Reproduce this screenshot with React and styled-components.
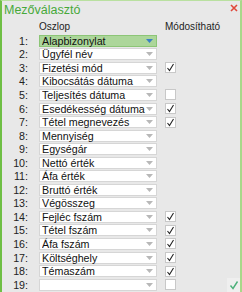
import React from "react";
import styled, { createGlobalStyle } from "styled-components";

const Global = createGlobalStyle`
  html, body { margin: 0; padding: 0; background: #e8e8e8; }
  body { font-family: "Liberation Sans", Arial, sans-serif; }
`;

const Panel = styled.div`
  box-sizing: border-box;
  width: 242px;
  height: 292px;
  background: #e8e8e8;
  border-left: 2px solid #6fbf45;
  border-right: 2px solid #a8d88a;
  border-top: 1px solid #b9e0a0;
  position: relative;
  overflow: hidden;
`;

const TitleBar = styled.div`
  height: 19px;
  display: flex;
  align-items: center;
  padding-left: 2px;
`;

const Title = styled.div`
  color: #47a83a;
  font-size: 12.5px;
  line-height: 1;
`;

const Close = styled.svg`
  position: absolute;
  top: 3px;
  right: 2px;
`;

const Header = styled.div`
  display: flex;
  align-items: center;
  height: 13px;
  font-size: 10px;
  color: #222;
`;

const HeaderCol = styled.div`
  margin-left: ${(p) => p.$ml}px;
  width: ${(p) => p.$w}px;
`;

const Rows = styled.div`
  display: flex;
  flex-direction: column;
  padding-top: 1px;
`;

const Row = styled.div`
  display: flex;
  align-items: center;
  height: 13.55px;
`;

const Num = styled.div`
  width: 26px;
  text-align: right;
  font-size: 10.7px;
  color: #222;
`;

const Select = styled.div`
  box-sizing: border-box;
  margin-left: 11px;
  width: 118px;
  height: 12px;
  display: flex;
  align-items: center;
  padding-left: 2px;
  padding-right: 3px;
  font-size: 10.7px;
  color: #111;
  background: ${(p) => (p.$active ? "#acd69a" : "#fff")};
  border: 1px solid ${(p) => (p.$active ? "#8cc576" : "#d6d6d6")};
`;

const SelText = styled.span`
  flex: 1;
  white-space: nowrap;
  overflow: hidden;
`;

const Box = styled.div`
  box-sizing: border-box;
  margin-left: 8px;
  width: 11px;
  height: 11px;
  background: #fff;
  border: 1px solid #c8c8c8;
  display: flex;
  align-items: center;
  justify-content: center;
`;

const OkButton = styled.div`
  position: absolute;
  right: 0;
  bottom: 0;
  width: 13px;
  height: 14px;
  background: #efefef;
  display: flex;
  align-items: center;
  justify-content: center;
`;

const Arrow = ({ active }) => (
  <svg width="7" height="4" viewBox="0 0 7 4">
    <path d="M0 0 H7 L3.5 4 Z" fill={active ? "#3b7fc4" : "#b8b8b8"} />
  </svg>
);

const Check = () => (
  <svg width="9" height="9" viewBox="0 0 9 9">
    <path d="M1.5 5 L3.5 7.5 L7.5 1" fill="none" stroke="#222" strokeWidth="1.1" />
  </svg>
);

const rows = [
  ["Alapbizonylat", null],
  ["Ügyfél név", null],
  ["Fizetési mód", true],
  ["Kibocsátás dátuma", null],
  ["Teljesítés dátuma", false],
  ["Esedékesség dátuma", true],
  ["Tétel megnevezés", true],
  ["Mennyiség", null],
  ["Egységár", null],
  ["Nettó érték", null],
  ["Áfa érték", null],
  ["Bruttó érték", null],
  ["Végösszeg", null],
  ["Fejléc fszám", true],
  ["Tétel fszám", true],
  ["Áfa fszám", true],
  ["Költséghely", true],
  ["Témaszám", true],
  ["", false],
];

export default function App() {
  return (
    <Panel>
      <Global />
      <TitleBar>
        <Title>Mezőválasztó</Title>
      </TitleBar>
      <Close width="8" height="8" viewBox="0 0 8 8">
        <path d="M1 1 L7 7 M7 1 L1 7" stroke="#e0473a" strokeWidth="1.6" />
      </Close>
      <Header>
        <HeaderCol $ml={37} $w={126}>Oszlop</HeaderCol>
        <HeaderCol $ml={0} $w={60}>Módosítható</HeaderCol>
      </Header>
      <Rows>
        {rows.map(([label, chk], i) => (
          <Row key={i}>
            <Num>{i + 1}:</Num>
            <Select $active={i === 0}>
              <SelText>{label}</SelText>
              <Arrow active={i === 0} />
            </Select>
            {chk !== null && <Box>{chk && <Check />}</Box>}
          </Row>
        ))}
      </Rows>
      <OkButton>
        <svg width="10" height="10" viewBox="0 0 10 10">
          <path d="M1.5 5.5 L4 8.5 L8.5 1.5" fill="none" stroke="#4cb07a" strokeWidth="1.4" />
        </svg>
      </OkButton>
    </Panel>
  );
}
